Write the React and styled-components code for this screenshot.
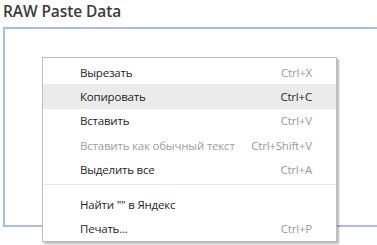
import React from "react";
import styled, { createGlobalStyle } from "styled-components";

const Global = createGlobalStyle`
  html, body {
    margin: 0;
    padding: 0;
    background: #fff;
    overflow: hidden;
  }
  body {
    font-family: "Open Sans", "Noto Sans", sans-serif;
  }
`;

const Page = styled.div`
  position: relative;
  width: 377px;
  height: 245px;
  overflow: hidden;
`;

const Title = styled.h3`
  margin: 0;
  padding: 0 0 0 3px;
  height: 27px;
  font-size: 15.5px;
  font-weight: 600;
  color: #3a3a3a;
  line-height: 22px;
  letter-spacing: -0.1px;
`;

const PasteBox = styled.div`
  margin-left: 3px;
  width: 420px;
  height: 200px;
  border: 2px solid #a9bbea;
  border-right: none;
  box-sizing: border-box;
`;

const Menu = styled.ul`
  position: absolute;
  left: 42px;
  top: 57px;
  width: 293px;
  margin: 0;
  padding: 2px 0 0;
  list-style: none;
  background: #fff;
  border: 1px solid #bdbdbd;
  box-shadow: 2px 2px 2px rgba(0, 0, 0, 0.28);
  font-size: 11.5px;
  letter-spacing: -0.2px;
`;

const Item = styled.li`
  display: flex;
  justify-content: space-between;
  align-items: center;
  height: 24.3px;
  padding: 0 24px 0 37px;
  background: ${(p) => (p.$active ? "#ebebeb" : "transparent")};
  color: ${(p) => (p.$disabled ? "#a0a0a0" : "#1e1e1e")};
`;

const Shortcut = styled.span`
  color: ${(p) => (p.$active ? "#2a2a2a" : "#9a9a9a")};
`;

const Separator = styled.li`
  height: 1px;
  margin: 3px 0 7px;
  background: #e6e6e6;
`;

const items = [
  { label: "Вырезать", key: "Ctrl+X" },
  { label: "Копировать", key: "Ctrl+C", active: true },
  { label: "Вставить", key: "Ctrl+V" },
  { label: "Вставить как обычный текст", key: "Ctrl+Shift+V", disabled: true },
  { label: "Выделить все", key: "Ctrl+A" },
  { sep: true },
  { label: 'Найти "" в Яндекс', key: "" },
  { label: "Печать...", key: "Ctrl+P" },
];

export default function App() {
  return (
    <Page>
      <Global />
      <Title>RAW Paste Data</Title>
      <PasteBox />
      <Menu>
        {items.map((it, i) =>
          it.sep ? (
            <Separator key={i} />
          ) : (
            <Item key={i} $active={it.active} $disabled={it.disabled}>
              <span>{it.label}</span>
              <Shortcut $active={it.active}>{it.key}</Shortcut>
            </Item>
          )
        )}
      </Menu>
    </Page>
  );
}
